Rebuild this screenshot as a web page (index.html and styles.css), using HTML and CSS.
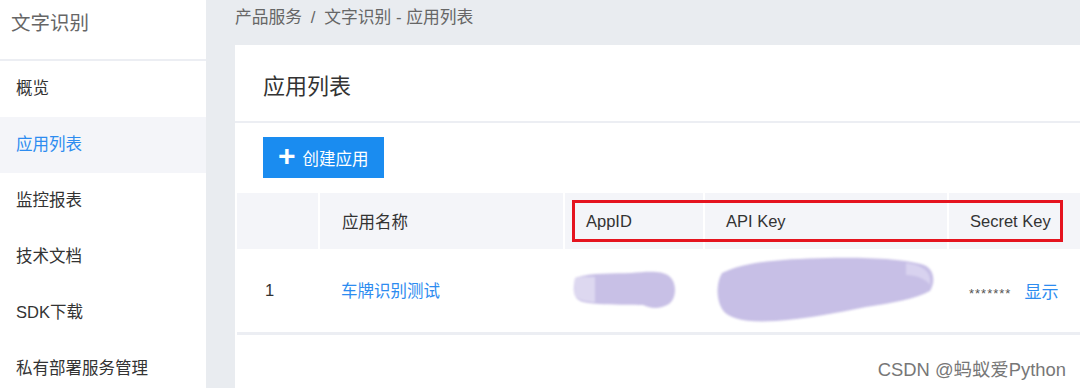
FILE: index.html
```html
<!DOCTYPE html>
<html lang="zh-CN">
<head>
    <meta charset="UTF-8">
    <title>文字识别 - 应用列表</title>
    <link rel="stylesheet" href="styles.css">
</head>
<body>
    <div class="layout">
        <div class="sidebar">
            <div class="sidebar-title">文字识别</div>
            <ul class="menu">
                <li>概览</li>
                <li class="active">应用列表</li>
                <li>监控报表</li>
                <li>技术文档</li>
                <li>SDK下载</li>
                <li>私有部署服务管理</li>
            </ul>
        </div>

        <div class="main">
            <div class="breadcrumb">产品服务 <span class="sep">/</span> 文字识别 - 应用列表</div>

            <div class="card">
                <div class="card-header">应用列表</div>
                <div class="card-body">
                    <button class="create-btn"><span class="plus">+</span>创建应用</button>
                </div>

                <div class="table-wrap">
                    <table>
                        <thead>
                            <tr>
                                <th class="col-no"></th>
                                <th class="col-name">应用名称</th>
                                <th class="col-id">AppID</th>
                                <th class="col-key">API Key</th>
                                <th class="col-secret">Secret Key</th>
                            </tr>
                        </thead>
                        <tbody>
                            <tr>
                                <td class="col-no">1</td>
                                <td class="col-name"><a class="link">车牌识别测试</a></td>
                                <td class="col-id">
                                    <svg class="blob" width="104" height="44" viewBox="0 0 104 44">
                                        <path d="M2 10 C20 4 40 6 58 5 C72 4 88 2 96 8 C104 14 104 30 96 36 C86 42 76 40 70 37 C54 36 30 38 10 34 C2 32 0 24 1 18 Z" fill="#c8c0e6"/>
                                        <path d="M2 10 C10 8 16 9 22 9 L22 34 C12 34 4 32 1 26 Z" fill="#e2ddf2" opacity="0.8"/>
                                    </svg>
                                </td>
                                <td class="col-key">
                                    <svg class="blob" width="222" height="70" viewBox="0 0 222 70">
                                        <path d="M6 18 C30 6 70 4 110 3 C150 2 190 4 208 10 C218 14 220 26 214 36 C200 44 176 48 150 52 C120 58 90 64 60 66 C30 68 12 64 6 54 C0 44 0 28 6 18 Z" fill="#c7bfe6"/>
                                        <path d="M190 8 C206 10 216 16 214 30 C210 24 200 20 190 20 Z" fill="#d8d2ef"/>
                                    </svg>
                                </td>
                                <td class="col-secret"><span class="stars">*******</span><a class="link">显示</a></td>
                            </tr>
                        </tbody>
                    </table>
                    <div class="highlight"></div>
                </div>
            </div>
        </div>
    </div>
    <div class="watermark">CSDN @蚂蚁爱Python</div>
</body>
</html>
```

FILE: styles.css
```css
:root {
    --blue: #2d8cf0;
    --btn-blue: #1a8cf0;
    --text: #333;
    --muted: #666;
    --line: #eceef3;
    --page-bg: #e9ecf0;
    --head-bg: #f4f5f9;
}

* {
    margin: 0;
    padding: 0;
    box-sizing: border-box;
}

body {
    font-family: "Liberation Sans", "Noto Sans CJK SC", sans-serif;
    background-color: var(--page-bg);
    color: var(--text);
    width: 1080px;
    height: 388px;
    overflow: hidden;
    position: relative;
}

.layout {
    display: flex;
    height: 388px;
}

.sidebar {
    width: 206px;
    flex-shrink: 0;
    background-color: white;
}

.sidebar-title {
    height: 61px;
    padding: 7px 0 0 11px;
    font-size: 19.5px;
    color: var(--muted);
    border-bottom: 2px solid var(--line);
}

.menu {
    list-style: none;
}

.menu li {
    height: 56px;
    line-height: 54px;
    padding-left: 16px;
    font-size: 16.5px;
    color: var(--text);
}

.menu li.active {
    background-color: #f4f5f9;
    color: var(--blue);
}

.main {
    flex-grow: 1;
    padding-left: 29px;
}

.breadcrumb {
    height: 45px;
    padding-top: 4px;
    font-size: 16.8px;
    color: var(--muted);
}

.breadcrumb .sep {
    margin: 0 4px;
}

.card {
    background-color: white;
    height: 343px;
}

.card-header {
    height: 78px;
    padding: 23px 0 0 28px;
    font-size: 22px;
    color: var(--text);
    border-bottom: 2px solid var(--line);
}

.card-body {
    padding: 14px 0 15px 28px;
}

.create-btn {
    display: flex;
    align-items: center;
    height: 41px;
    width: 121px;
    padding-left: 15px;
    border: none;
    background-color: var(--btn-blue);
    color: white;
    font-family: inherit;
    font-size: 16.5px;
}

.create-btn .plus {
    font-size: 30px;
    font-weight: bold;
    margin-right: 7px;
    line-height: 1;
    margin-top: -3px;
}

.table-wrap {
    position: relative;
    padding-left: 2px;
}

table {
    width: 100%;
    border-collapse: collapse;
}

th {
    height: 56px;
    background-color: var(--head-bg);
    font-weight: normal;
    font-size: 16.5px;
    text-align: left;
    color: var(--text);
    border-right: 2px solid white;
    padding-left: 22px;
}

th:last-child {
    border-right: none;
}

td {
    height: 84px;
    font-size: 16.5px;
    color: var(--text);
    border-bottom: 3px solid var(--line);
    padding-left: 22px;
}

.col-no {
    width: 82px;
    padding-left: 28px;
}

.col-name {
    width: 245px;
}

.col-id {
    width: 140px;
    padding-left: 9px;
}

.col-key {
    width: 244px;
    padding-left: 12px;
}

th.col-id,
th.col-key {
    padding-left: 21px;
}

th.col-secret,
td.col-secret {
    padding-left: 21px;
}

.blob {
    display: block;
    filter: blur(1px);
}

.link {
    color: var(--blue);
    cursor: pointer;
}

.stars {
    font-size: 13px;
    color: #555;
    margin-right: 13px;
    letter-spacing: 1px;
}

.col-secret .link {
    font-size: 17px;
}

.highlight {
    position: absolute;
    left: 337px;
    top: 7px;
    width: 491px;
    height: 42px;
    border: 3px solid #e5141f;
}

.watermark {
    position: absolute;
    right: 14px;
    bottom: 7px;
    font-size: 18.4px;
    color: #777;
}
```
